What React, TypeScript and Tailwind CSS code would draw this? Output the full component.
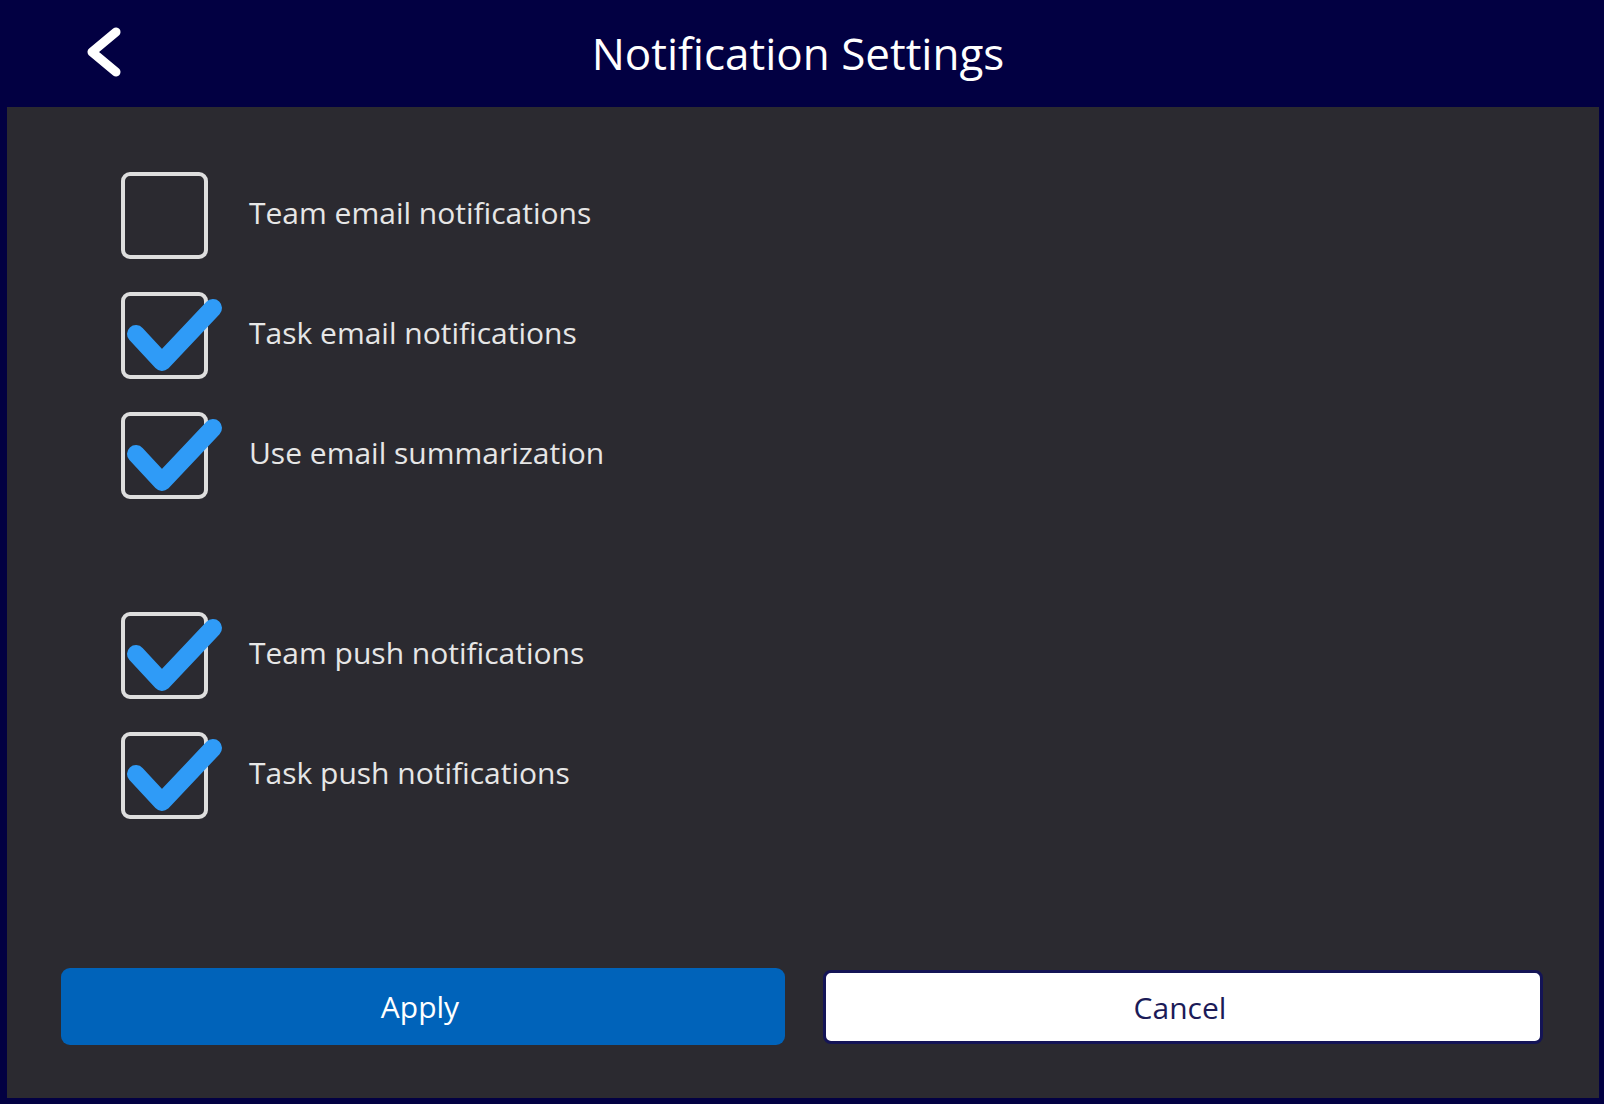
import { useState } from 'react'

const emailOptions = [
  { id: 'team-email', label: 'Team email notifications', checked: false },
  { id: 'task-email', label: 'Task email notifications', checked: true },
  { id: 'summary', label: 'Use email summarization', checked: true },
]

const pushOptions = [
  { id: 'team-push', label: 'Team push notifications', checked: true },
  { id: 'task-push', label: 'Task push notifications', checked: true },
]

function CheckRow({ label, checked, onToggle }: { label: string; checked: boolean; onToggle: () => void }) {
  return (
    <button onClick={onToggle} className="flex items-center gap-[41px] text-left">
      <span className="relative block w-[87px] h-[87px] shrink-0 rounded-[9px] border-[4px] border-[#dedede]">
        {checked && (
          <svg className="absolute -left-[4px] -top-[4px] overflow-visible" width="100" height="90" viewBox="0 0 100 90">
            <path d="M15 42 L41 70 L92 16" fill="none" stroke="#2f9bf7" strokeWidth="18" strokeLinecap="round" strokeLinejoin="round" />
          </svg>
        )}
      </span>
      <span className="text-[30px] font-medium text-[#e6e6e6] leading-none -mt-[5px]">{label}</span>
    </button>
  )
}

export default function App() {
  const [state, setState] = useState<Record<string, boolean>>(() =>
    Object.fromEntries([...emailOptions, ...pushOptions].map(o => [o.id, o.checked]))
  )
  const toggle = (id: string) => setState(s => ({ ...s, [id]: !s[id] }))

  return (
    <div className="w-[1604px] h-[1104px] bg-[#020042] flex flex-col" style={{ fontFamily: '"Open Sans", "Noto Sans", sans-serif' }}>
      {/* Header */}
      <header className="relative h-[107px] shrink-0 flex items-center justify-center">
        <button className="absolute left-[84px] top-[26px] w-[42px] h-[54px]" aria-label="Back">
          <svg width="42" height="54" viewBox="0 0 42 54">
            <path d="M32 6 L8 26 L32 46" fill="none" stroke="#fff" strokeWidth="9" strokeLinecap="round" strokeLinejoin="round" />
          </svg>
        </button>
        <h1 className="text-[44px] font-medium text-white leading-none -mt-[2px] ml-[-8px]">Notification Settings</h1>
      </header>

      {/* Body */}
      <main className="flex-1 ml-[7px] mr-[5px] mb-[6px] bg-[#2b2a30] flex flex-col">
        <div className="pl-[114px] pt-[65px] flex flex-col gap-[33px]">
          {emailOptions.map(o => (
            <CheckRow key={o.id} label={o.label} checked={state[o.id]} onToggle={() => toggle(o.id)} />
          ))}
        </div>
        <div className="pl-[114px] pt-[113px] flex flex-col gap-[33px]">
          {pushOptions.map(o => (
            <CheckRow key={o.id} label={o.label} checked={state[o.id]} onToggle={() => toggle(o.id)} />
          ))}
        </div>

        <div className="mt-auto flex gap-[38px] pl-[54px] pr-[56px] pb-[53px]">
          <button className="w-[724px] h-[77px] rounded-[9px] bg-[#0063ba] text-white text-[30px] font-medium pr-[6px]">Apply</button>
          <button className="flex-1 h-[74px] mt-[2px] rounded-[8px] bg-white border-[3px] border-[#141456] text-[#1b1b58] text-[30px] font-medium pr-[6px]">Cancel</button>
        </div>
      </main>
    </div>
  )
}
